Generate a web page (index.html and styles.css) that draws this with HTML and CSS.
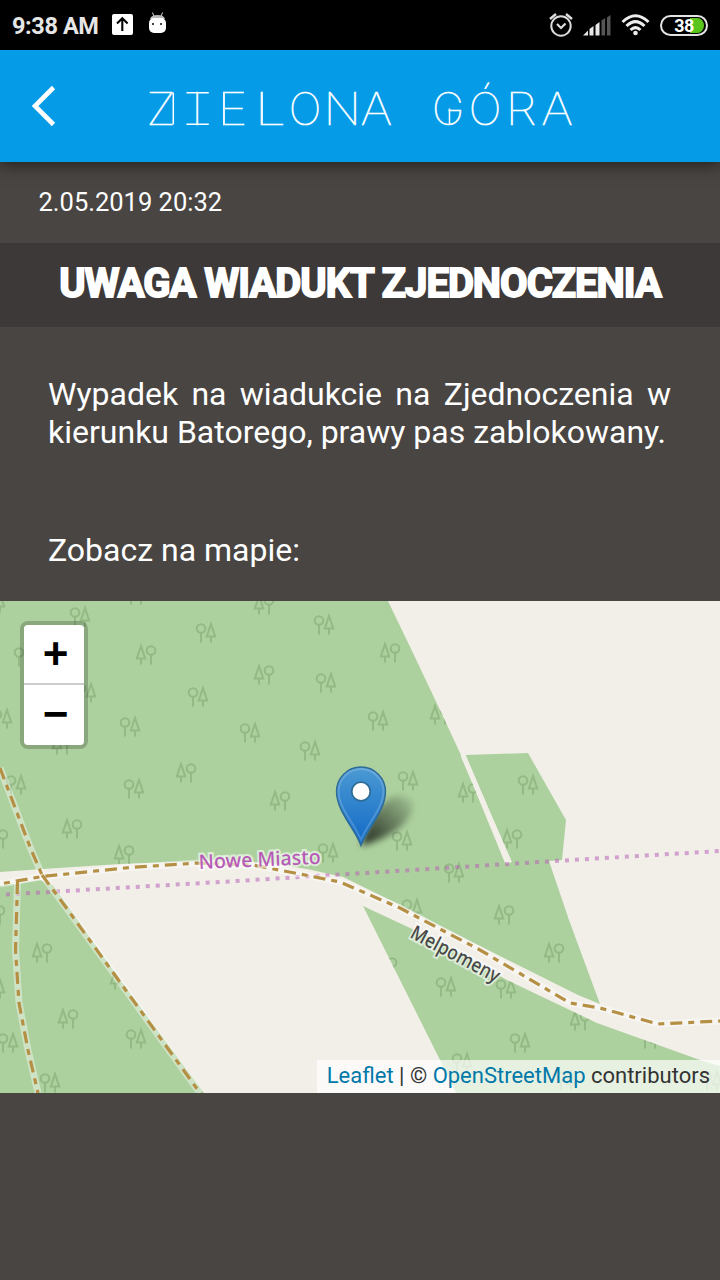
FILE: index.html
```
<!DOCTYPE html>
<html lang="pl">
<head>
<meta charset="utf-8">
<title>Zielona Góra</title>
<link rel="stylesheet" href="styles.css">
</head>
<body>
<div class="status">
  <span class="clock">9:38 AM</span>
  <svg class="upload" width="22" height="22" viewBox="0 0 22 22"><rect x="0" y="0" width="21" height="21" rx="2" fill="#fff"/><path d="M10.3 17V5M5 9.5l5.3-5.3 5.3 5.3" fill="none" stroke="#000" stroke-width="2.1"/></svg>
  <svg class="droid" width="20" height="22" viewBox="0 0 20 22"><path d="M4.5 0.5l1.5 4M14.5 0.5l-1.5 4" stroke="#ddd" stroke-width="1"/><path d="M2 7Q3 3 9.5 3T17 7z" fill="#bbb"/><rect x="1" y="6" width="17" height="15" rx="5" fill="#fff"/><circle cx="5" cy="12" r="1" /><circle cx="13" cy="12" r="1"/></svg>
  <div class="indicators">
    <svg width="24" height="24" viewBox="0 0 24 24" fill="none" stroke="#ddd" stroke-width="2"><circle cx="12" cy="13" r="9.7"/><path d="M8 11l4 4 4.5-4.5" stroke-width="2.2"/><path d="M1 6l6-5M23 6l-6-5" stroke-width="2.4"/></svg>
    <svg width="28" height="21" viewBox="0 0 28 21"><g fill="#e8e8e8"><path d="M0 20.500L5 15.5V20.500zM6.500 20.500v-6.500l4-3V20.500zM12.500 20.500V10l4-3V20.500z"/></g><path fill="#555" d="M18.500 20.500V5.500l3.600-2.500V20.500zM24 20.500V2.500L27.500 0V20.500z"/></svg>
    <svg width="29" height="22" viewBox="0 0 29 22" fill="none" stroke="#eee" stroke-width="3"><path d="M1.5 8Q14.5-4.5 27.5 8M5.5 12Q14.5 3.2 23.500 12M9.500 16Q14.500 11.300 19.500 16"/><circle cx="14.500" cy="19" r="2.300" fill="#eee" stroke="none"/></svg>
    <div class="battery"><span>38</span></div>
  </div>
</div>
<header class="bar">
  <svg class="back" width="26" height="42" viewBox="0 0 26 42"><path d="M22.500 2.500L4 21l18.500 18.500" fill="none" stroke="#fff" stroke-width="4.600"/></svg>
  <svg class="brand" width="440" height="60" viewBox="140 76 440 60">
    <text transform="translate(146.300 124.800) scale(1.080 1)">Z</text>
    <text transform="translate(191.400 124.800)">I</text>
    <text transform="translate(217.500 124.800) scale(1.150 1)">E</text>
    <text transform="translate(254.700 124.800) scale(1.250 1)">L</text>
    <text transform="translate(288.800 124.800) scale(.970 1)">O</text>
    <text transform="translate(323.500 124.800) scale(1.080 1)">N</text>
    <text transform="translate(360.500 124.800) scale(1.100 1)">A</text>
    <text transform="translate(432 124.800) scale(.970 1)">G</text>
    <text transform="translate(468.800 124.800) scale(.970 1)">Ó</text>
    <text transform="translate(505.500 124.800) scale(1.120 1)">R</text>
    <text transform="translate(541.300 124.800) scale(1.100 1)">A</text>
    <path d="M173.300 92.500V124.500M186.500 92.700H208.800M186.500 124.300H208.800M449.500 108.500V124.500" fill="none" stroke="#fff" stroke-width="1.500"/>
  </svg>
</header>
<main>
  <p class="date">2.05.2019 20:32</p>
  <h1 class="title">UWAGA WIADUKT ZJEDNOCZENIA</h1>
  <p class="body">Wypadek na wiadukcie na Zjednoczenia w kierunku Batorego, prawy pas zablokowany.</p>
  <p class="see">Zobacz na mapie:</p>
  <div class="map">
    <svg class="tiles" width="720" height="492" viewBox="0 601 720 492">
      <defs>
        <g id="r"><circle cx="5" cy="5.500" r="4.300"/><path d="M5 9.800V19.500"/></g>
        <g id="c"><path d="M5 1L.8 13.500H9.200zM5 13.500V19.500"/></g>
        <g id="a"><use href="#r"/><use href="#c" x="10"/></g>
        <g id="b"><use href="#c"/><use href="#r" x="10"/></g>
        <clipPath id="woods"><path d="M0 601H388L413 653 440 710 460 753 505 863 512 862 465 755 528 753 566 820 562 860 549 861 569 920 600 1004 578 995 440 926 400 905 343 877 307 869 270 863 200 861 120 864 43 869 0 872zM0 886L40 880 53 885 113 970 204 1093H0zM363 906L440 942 507 980 597 1023 700 1060 720 1066V1093H456L440 1060 400 980z"/></clipPath>
        <linearGradient id="pin" x2="0" y2="1"><stop offset="0" stop-color="#4b9ad3"/><stop offset="1" stop-color="#1169c6"/></linearGradient>
        <linearGradient id="shade" x1="0" y1="1" x2="1" y2="0"><stop offset=".1" stop-opacity=".75"/><stop offset="1" stop-opacity=".05"/></linearGradient>
        <filter id="soft" x="-30%" y="-30%" width="160%" height="160%"><feGaussianBlur stdDeviation="3.500"/></filter>
      </defs>
      <rect y="601" width="720" height="492" fill="#f2efe9"/>
      <path class="wood" d="M0 601H388L413 653 440 710 460 753 505 863 512 862 465 755 528 753 566 820 562 860 549 861 569 920 600 1004 578 995 440 926 400 905 343 877 307 869 270 863 200 861 120 864 43 869 0 872zM0 886L40 880 53 885 113 970 204 1093H0zM363 906L440 942 507 980 597 1023 700 1060 720 1066V1093H456L440 1060 400 980z"/>
      <path d="M463 755L509 863" stroke="#f2efe9" stroke-width="5"/>
      <g class="trees" clip-path="url(#woods)">
        <use href="#a" x="70" y="607"/><use href="#a" x="196" y="623"/><use href="#a" x="14" y="647"/><use href="#a" x="76" y="683"/><use href="#a" x="188" y="687"/><use href="#a" x="-8" y="709"/><use href="#a" x="120" y="717"/><use href="#a" x="6" y="775"/><use href="#a" x="124" y="779"/><use href="#a" x="-15" y="593"/>
        <use href="#b" x="136" y="645"/><use href="#b" x="52" y="735"/><use href="#b" x="176" y="763"/><use href="#b" x="62" y="819"/><use href="#b" x="-12" y="829"/><use href="#b" x="114" y="845"/><use href="#b" x="126" y="585"/>
        <use href="#a" x="314" y="615"/><use href="#a" x="316" y="673"/><use href="#a" x="368" y="711"/><use href="#a" x="240" y="723"/><use href="#a" x="300" y="741"/><use href="#a" x="398" y="771"/><use href="#a" x="392" y="831"/><use href="#a" x="318" y="843"/>
        <use href="#b" x="254" y="595"/><use href="#b" x="380" y="643"/><use href="#b" x="254" y="665"/><use href="#b" x="430" y="705"/><use href="#b" x="458" y="783"/><use href="#b" x="270" y="791"/>
        <use href="#a" x="518" y="775"/><use href="#b" x="502" y="829"/><use href="#a" x="444" y="863"/><use href="#b" x="494" y="905"/>
        <use href="#b" x="32" y="943"/><use href="#a" x="-15" y="979"/><use href="#b" x="58" y="1009"/><use href="#a" x="126" y="1029"/><use href="#a" x="-2" y="1033"/><use href="#a" x="40" y="1073"/><use href="#b" x="-15" y="905"/><use href="#b" x="110" y="970"/>
        <use href="#a" x="402" y="899"/><use href="#a" x="436" y="977"/><use href="#a" x="452" y="1053"/><use href="#b" x="377" y="957"/><use href="#a" x="496" y="979"/><use href="#b" x="544" y="943"/><use href="#b" x="570" y="1011"/><use href="#a" x="510" y="1033"/><use href="#a" x="640" y="1029"/><use href="#a" x="556" y="1071"/><use href="#a" x="702" y="1071"/>
      </g>
      <path class="boundary" d="M6 894.500L237 881 477 866 555 861 720 851"/>
      <g class="halo"><path id="nw" d="M0 768L30 847 42 875"/><path id="east" d="M0 884L42 876.500 130 867.500 198 863 253 865 310 876 340 882 400 908 480 950 570 1003 600 1008 658 1024 720 1021"/><path id="south" d="M17.500 882L15.500 950 19 1003 28 1050 38 1093"/><path id="se" d="M42 875L65 906 200 1093"/></g>
      <g class="track"><use href="#nw"/><use href="#east" stroke-dashoffset="14"/><use href="#south"/><use href="#se"/></g>
      <text class="place" transform="translate(199 869) rotate(-2.500)" textLength="122" lengthAdjust="spacingAndGlyphs">Nowe Miasto</text>
      <text class="road" transform="translate(409 937) rotate(28)" textLength="98" lengthAdjust="spacingAndGlyphs">Melpomeny</text>
      <path d="M361 846Q370 808 394 796Q418 795 411 813Q402 834 361 846z" fill="url(#shade)" filter="url(#soft)"/>
      <path d="M361 845.500C355 829 336.500 811 336.500 791.500A24.500 24.500 0 0 1 385.500 791.500C385.500 811 367 829 361 845.500z" fill="url(#pin)" stroke="#2e6c97" stroke-width="1.400"/>
      <path d="M361 840C355 824 338.500 808 338.500 791.500A22.500 22.500 0 0 1 383.500 791.500C383.500 808 367 824 361 840z" fill="none" stroke="#fff" stroke-opacity=".18" stroke-width="2"/>
      <circle cx="361" cy="791.500" r="9.300" fill="#fff" stroke="#2e6c97" stroke-width="1.800"/>
    </svg>
    <div class="zoom"><button>+</button><button>−</button></div>
    <div class="credit"><a>Leaflet</a> | © <a>OpenStreetMap</a> contributors</div>
  </div>
</main>
</body>
</html>
```
FILE: styles.css
```
* { box-sizing: border-box; }
body { margin: 0; width: 720px; height: 1280px; overflow: hidden; background: #494542; color: #fff; font-family: Roboto, sans-serif; }
p, h1 { margin: 0; }
.status { height: 50px; background: #000; display: flex; align-items: center; padding: 0 12px; }
.clock { width: 100px; font-size: 23.5px; font-weight: 700; letter-spacing: -.4px; color: #e6e6e6; line-height: 50px; padding-top: 2px; white-space: nowrap; }
.droid { margin: 0 0 5px 14px; }
.indicators { margin-left: auto; display: flex; align-items: center; gap: 10px; position: relative; left: -1px; }
.battery { width: 48px; height: 21px; margin-right: -1px; border: 2px solid #e4e4e4; border-radius: 11px; padding: 1px 2px; text-align: center; font: 700 18px/16px Roboto, sans-serif; letter-spacing: -.5px; background: linear-gradient(90deg, #000 65%, #59c51c 65%) content-box; overflow: hidden; }
.bar { position: relative; height: 112px; background: #059be7; display: flex; align-items: center; padding-left: 31px; box-shadow: 0 2px 16px rgba(0, 0, 0, .6); }
.brand { margin-left: 83px; font-family: Inter, sans-serif; font-size: 45px; font-weight: 100; fill: #fff; stroke: #fff; stroke-width: .6px; }
.date { height: 81px; padding: 24px 38.5px 0; font-size: 25.5px; line-height: 32px; }
.title { height: 84px; background: #3d3938; text-align: center; font-size: 40px; line-height: 81px; font-weight: 700; letter-spacing: -1px; -webkit-text-stroke: 1.8px #fff; white-space: nowrap; }
.body { padding: 48px 49px 0 48px; height: 203px; font-size: 32px; line-height: 38px; text-align: justify; }
.see { padding-left: 48px; height: 71px; font-size: 32px; line-height: 40px; }
.map { position: relative; height: 492px; }
.tiles { display: block; }
.wood { fill: #add19e; }
.trees { fill: none; stroke: #93b984; stroke-width: 2; }
.boundary { fill: none; stroke: #b662b6; stroke-opacity: .55; stroke-width: 4; stroke-dasharray: 4 6; }
.halo { fill: none; stroke: #fff; stroke-opacity: .4; stroke-width: 7; }
.track { fill: none; stroke: #b59044; stroke-width: 3.2; stroke-dasharray: 12 6 6 6; }
.place, .road { font-family: "Noto Sans", sans-serif; font-size: 20px; font-weight: 500; paint-order: stroke; stroke: #fff; stroke-opacity: .6; stroke-width: 4px; }
.place { fill: #b75ab7; }
.road { fill: #484848; }
.zoom { position: absolute; left: 20px; top: 20px; width: 68px; border: 4px solid rgba(0, 0, 0, .2); border-radius: 8px; background-clip: padding-box; }
.zoom button { display: block; width: 60px; height: 60px; border: 0; padding: 0 0 2px 3px; background: #fff; color: #000; font: 700 44px/58px "Liberation Sans", sans-serif; }
.zoom button:first-child { border-bottom: 2px solid #ccc; border-radius: 4px 4px 0 0; }
.zoom button:last-child { border-radius: 0 0 4px 4px; }
.credit { position: absolute; right: 0; bottom: 0; height: 33px; padding: 0 10px; background: rgba(255, 255, 255, .7); color: #333; font-size: 22px; line-height: 31px; white-space: nowrap; }
.credit a { color: #0078a8; }
```
